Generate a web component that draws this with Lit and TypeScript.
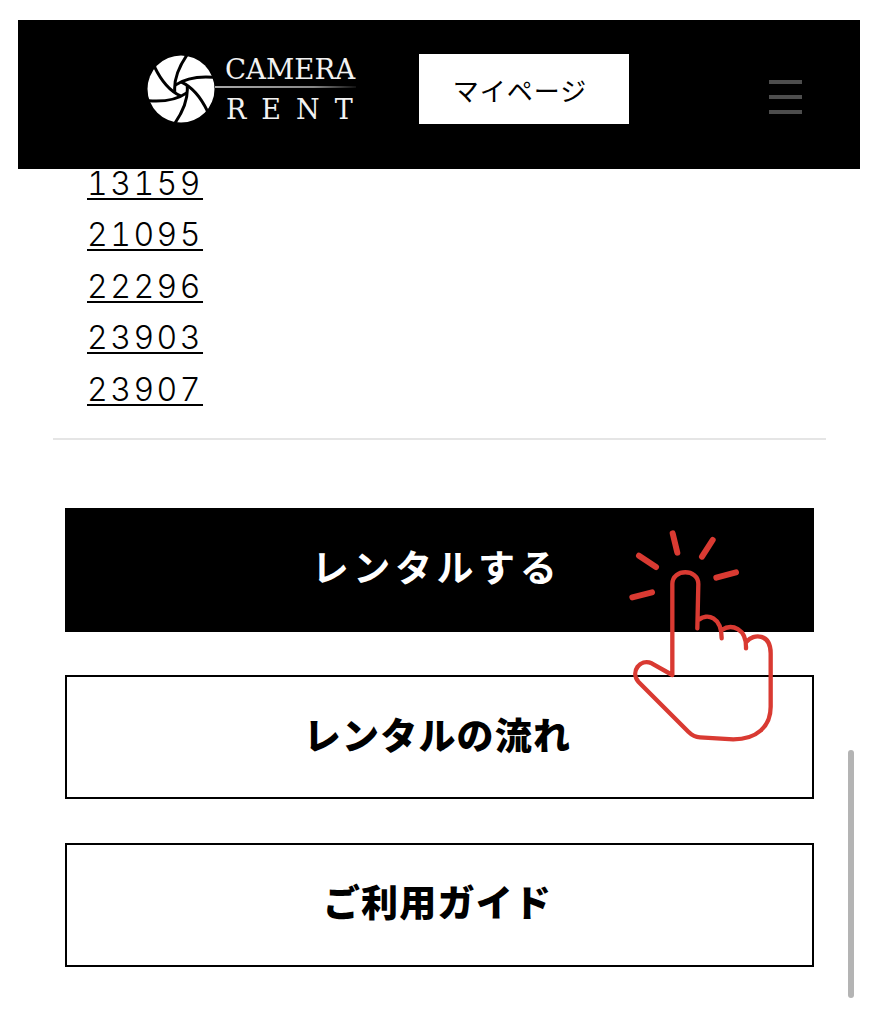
import { LitElement, html, css, svg } from "lit";
import { customElement } from "lit/decorators.js";

const numbers = ["13159", "21095", "22296", "23903", "23907"];
const actions = [
  { label: "レンタルする", primary: true },
  { label: "レンタルの流れ", primary: false },
  { label: "ご利用ガイド", primary: false },
];

// one blade edge of the aperture, rotated six times round the centre
const blade = svg`<path d="M6 -34Q-7.75 -14 -6.2 3" fill="none" stroke="#000" stroke-width="3"/>`;

@customElement("app-root")
export class AppRoot extends LitElement {
  static styles = css`
    :host {
      display: block;
      position: relative;
      width: 881px;
      height: 1024px;
      overflow: hidden;
      background: #fff;
      font-family: "Liberation Sans", "Noto Sans CJK JP", sans-serif;
      color: #000;
    }
    .header {
      display: flex;
      align-items: center;
      box-sizing: border-box;
      width: 842px;
      height: 149px;
      margin: 20px 0 0 18px;
      padding: 0 0 11px 129px;
      background: #000;
    }
    .mark {
      width: 68px;
      height: 68px;
      flex: none;
    }
    .wordmark {
      display: flex;
      flex-direction: column;
      width: 141px;
      margin-top: 2px;
      color: #f2f2f2;
      font-family: "DejaVu Serif", serif;
      font-size: 27px;
      line-height: 30px;
    }
    .wordmark span {
      white-space: nowrap;
    }
    .camera {
      padding-left: 10px;
      font-size: 27.6px;
    }
    .rent {
      padding: 7px 0 0 11px;
      letter-spacing: 15px;
    }
    .rule {
      height: 2px;
      margin: 1px 0 0;
      background: linear-gradient(90deg, #aaa, #888 70%, #111);
    }
    .mypage {
      display: flex;
      align-items: center;
      justify-content: center;
      box-sizing: border-box;
      width: 210px;
      height: 70px;
      margin-left: 63px;
      padding-right: 8px;
      background: #fff;
      font-size: 26px;
      letter-spacing: 1px;
    }
    .menu {
      display: flex;
      flex-direction: column;
      gap: 11px;
      width: 33px;
      margin: 16px 0 0 140px;
    }
    .menu i {
      height: 4px;
      background: #4d4d4d;
    }
    .numbers {
      display: flex;
      flex-direction: column;
      align-items: flex-start;
      margin: 0 0 0 87px;
      padding: 0;
      list-style: none;
    }
    .numbers li {
      height: 51.4px;
      line-height: 30px;
      font-family: Inter, "Noto Sans CJK JP", sans-serif;
      font-size: 32px;
      font-weight: 300;
      font-feature-settings: "tnum";
      letter-spacing: 2.5px;
    }
    .numbers a {
      color: #000;
      text-decoration: underline;
      text-decoration-thickness: 2px;
      text-underline-offset: 3px;
    }
    .divider {
      height: 2px;
      margin: 12px 55px 0 53px;
      background: #e5e5e5;
    }
    .actions {
      display: flex;
      flex-direction: column;
      gap: 43.5px;
      margin: 68px 67px 0 65px;
    }
    .action {
      display: flex;
      align-items: center;
      justify-content: center;
      box-sizing: border-box;
      height: 124px;
      padding: 0 4px 7px 0;
      border: 2px solid #000;
      font-size: 37px;
      font-weight: 900;
      letter-spacing: 1.2px;
    }
    .action.primary {
      background: #000;
      color: #fff;
      padding: 0 6px 8px 0;
      font-weight: 700;
      letter-spacing: 4.6px;
    }
    .hand {
      position: absolute;
      left: 620px;
      top: 520px;
      width: 170px;
      height: 230px;
    }
    .scrollbar {
      position: absolute;
      left: 848px;
      top: 750px;
      width: 6px;
      height: 248px;
      border-radius: 3px;
      background: #b4b4b4;
    }
  `;

  private renderMark() {
    const angles = [0, 60, 120, 180, 240, 300];
    return html`<svg class="mark" viewBox="-34 -34 68 68">
      <circle r="33.5" fill="#fff"></circle>
      ${angles.map((a) => svg`<g transform="rotate(${a})">${blade}</g>`)}
    </svg>`;
  }

  private renderHand() {
    return html`<svg class="hand" viewBox="0 0 510 690">
      <g fill="none" stroke="#d93a32" stroke-linecap="round" stroke-linejoin="round">
        <g stroke-width="18">
          <path d="M158 40L172 98"></path>
          <path d="M278 60L246 110"></path>
          <path d="M57 107L108 141"></path>
          <path d="M348 157L289 173"></path>
          <path d="M37 232L96 217"></path>
        </g>
        <path
          stroke-width="13"
          d="M157 465V192C157 145 235 145 235 192L232 325M235 300C262 278 305 290 305 355M305 330C335 310 380 325 378 385M380 365C400 340 452 340 452 400V560C452 620 410 658 340 658L240 652C220 651 212 642 205 635L55 485C30 455 60 415 95 430L157 465"
        ></path>
      </g>
    </svg>`;
  }

  render() {
    return html`
      <header class="header">
        ${this.renderMark()}
        <div class="wordmark">
          <span class="camera">CAMERA</span>
          <div class="rule"></div>
          <span class="rent">RENT</span>
        </div>
        <div class="mypage">マイページ</div>
        <div class="menu"><i></i><i></i><i></i></div>
      </header>
      <ul class="numbers">
        ${numbers.map((n) => html`<li><a href="#">${n}</a></li>`)}
      </ul>
      <div class="divider"></div>
      <div class="actions">
        ${actions.map(
          (a) => html`<div class="action ${a.primary ? "primary" : ""}">${a.label}</div>`
        )}
      </div>
      ${this.renderHand()}
      <div class="scrollbar"></div>
    `;
  }
}
